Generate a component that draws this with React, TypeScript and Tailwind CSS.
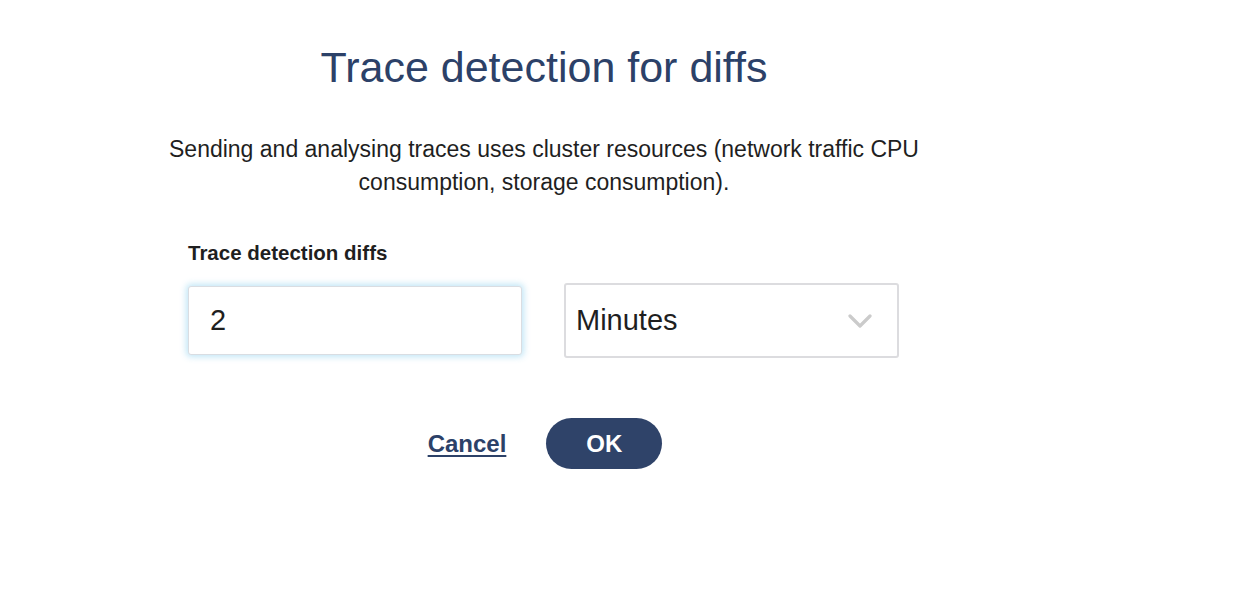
export default function App() {
  return (
    <div className="min-h-[604px] w-full bg-white font-['Liberation_Sans',Arial,sans-serif]">
      <div className="ml-[144px] flex w-[800px] flex-col items-center pt-[44px]">
        {/* Heading */}
        <h1 className="text-[43px] leading-[46px] text-[#2c4168]">Trace detection for diffs</h1>

        {/* Description */}
        <p className="mt-[43px] whitespace-nowrap text-center text-[23px] leading-[33px] text-[#1f1f1f]">
          Sending and analysing traces uses cluster resources (network traffic CPU
          <br />
          consumption, storage consumption).
        </p>

        {/* Form */}
        <div className="mt-[43px] w-[712px]">
          <label className="block text-[20.5px] font-bold leading-[22px] text-[#1f1f1f]">
            Trace detection diffs
          </label>
          <div className="mt-[19px] flex items-center gap-[42px]">
            <input
              defaultValue="2"
              className="h-[69px] w-[334px] rounded-[3px] border border-[#d9dde2] bg-white px-[21px] text-[29px] text-[#1f1f1f] shadow-[0_0_6px_2px_rgba(120,200,235,0.45)] outline-none"
            />
            <div className="flex h-[75px] w-[335px] items-center justify-between rounded-[3px] border-2 border-[#dcdcdf] bg-white pl-[10px] pr-[25px]">
              <span className="text-[29px] text-[#1f1f1f]">Minutes</span>
              <svg width="24" height="14" viewBox="0 0 24 14" fill="none">
                <path d="M2 2l10 10L22 2" stroke="#cbcbcb" strokeWidth="3.2" strokeLinecap="round" strokeLinejoin="round" />
              </svg>
            </div>
          </div>
        </div>

        {/* Actions */}
        <div className="mt-[60px] flex items-center gap-[40px] pl-[2px]">
          <button className="text-[24px] font-bold text-[#2c4168] underline underline-offset-[3px]">
            Cancel
          </button>
          <button className="h-[51px] w-[116px] rounded-full bg-[#2f4369] text-[24px] font-bold text-white">
            OK
          </button>
        </div>
      </div>
    </div>
  );
}
